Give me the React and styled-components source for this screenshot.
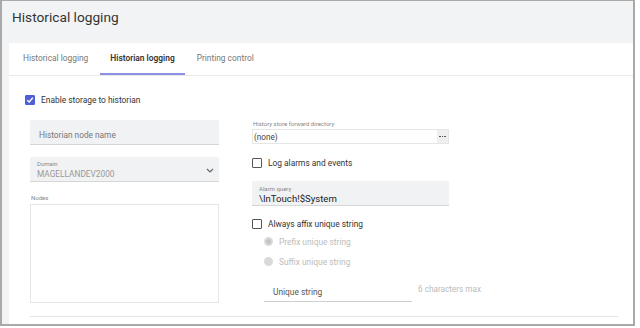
import React from "react";
import styled, { createGlobalStyle } from "styled-components";

const Global = createGlobalStyle`
	html, body {
		margin: 0;
		padding: 0;
		background: #ffffff;
		font-family: Roboto, "Liberation Sans", sans-serif;
	}
`;

export default function App() {
	return (
		<>
			<Global />
			<Frame>
				<Header>Historical logging</Header>
				<Panel>
					<Tabs>
						<Tab>Historical logging</Tab>
						<Tab active>Historian logging</Tab>
						<Tab>Printing control</Tab>
					</Tabs>
					<Content>
						<CheckRow>
							<Check checked>
								<svg width="8" height="8" viewBox="0 0 8 8">
									<path d="M1.2 4.2 L3.2 6 L6.8 1.8" fill="none" stroke="#fff" strokeWidth="1.4" />
								</svg>
							</Check>
							<CheckLabel>Enable storage to historian</CheckLabel>
						</CheckRow>
						<Columns>
							<Column>
								<FilledField top={15}>
									<Placeholder>Historian node name</Placeholder>
								</FilledField>
								<FilledField top={12} select>
									<SmallLabel>Domain</SmallLabel>
									<Value muted>MAGELLANDEV2000</Value>
									<Chevron viewBox="0 0 8 5" width="8" height="5">
										<path d="M1 1 L4 4 L7 1" fill="none" stroke="#666" strokeWidth="1.2" />
									</Chevron>
								</FilledField>
								<OuterLabel>Nodes</OuterLabel>
								<TextBox />
							</Column>
							<Column right>
								<OuterLabel top={15}>History store forward directory</OuterLabel>
								<PathInput>
									<span>(none)</span>
									<DotsButton>
										<Dot />
										<Dot />
										<Dot />
									</DotsButton>
								</PathInput>
								<CheckRow top={13}>
									<Check />
									<CheckLabel>Log alarms and events</CheckLabel>
								</CheckRow>
								<FilledField top={13}>
									<SmallLabel>Alarm query</SmallLabel>
									<Value>\InTouch!$System</Value>
								</FilledField>
								<CheckRow top={12}>
									<Check />
									<CheckLabel>Always affix unique string</CheckLabel>
								</CheckRow>
								<RadioRow top={7}>
									<Radio selected />
									<RadioLabel>Prefix unique string</RadioLabel>
								</RadioRow>
								<RadioRow top={9}>
									<Radio />
									<RadioLabel>Suffix unique string</RadioLabel>
								</RadioRow>
								<UniqueRow>
									<UnderInput>Unique string</UnderInput>
									<Hint>6 characters max</Hint>
								</UniqueRow>
							</Column>
						</Columns>
						<Divider />
					</Content>
				</Panel>
			</Frame>
		</>
	);
}

const Frame = styled.div`
	width: 635px;
	height: 326px;
	box-sizing: border-box;
	border: 2px solid #a9a9a9;
	border-top-width: 1px;
	background: #f2f3f5;
	display: flex;
	flex-direction: column;
	overflow: hidden;
`;

const Header = styled.div`
	height: 42px;
	padding-left: 10px;
	padding-top: 8px;
	box-sizing: border-box;
	font-size: 13.7px;
	color: #333;
`;

const Panel = styled.div`
	flex: 1;
	margin-left: 7px;
	background: #fff;
	display: flex;
	flex-direction: column;
`;

const Tabs = styled.div`
	height: 33px;
	display: flex;
	padding-left: 4px;
	border-bottom: 1px solid #e9e9e9;
	box-sizing: border-box;
`;

const Tab = styled.div`
	padding: 0 10px;
	margin-right: 2px;
	display: flex;
	align-items: center;
	font-size: 8.4px;
	font-weight: ${(p) => (p.active ? 600 : 400)};
	color: ${(p) => (p.active ? "#333" : "#777")};
	border-bottom: 2px solid ${(p) => (p.active ? "#8b90e2" : "transparent")};
	box-sizing: border-box;
`;

const Content = styled.div`
	padding: 18px 0 0 16px;
	display: flex;
	flex-direction: column;
`;

const CheckRow = styled.div`
	display: flex;
	align-items: center;
	height: 11px;
	margin-top: ${(p) => p.top || 0}px;
`;

const Check = styled.div`
	width: 10px;
	height: 10px;
	box-sizing: border-box;
	border-radius: 1px;
	border: 1.5px solid ${(p) => (p.checked ? "#4f5fd6" : "#555")};
	background: ${(p) => (p.checked ? "#4f5fd6" : "#fff")};
	display: flex;
	align-items: center;
	justify-content: center;
`;

const CheckLabel = styled.span`
	margin-left: 6px;
	font-size: 8.4px;
	color: #333;
`;

const Columns = styled.div`
	display: flex;
	padding-left: 5px;
	gap: 33px;
`;

const Column = styled.div`
	width: ${(p) => (p.right ? 197 : 189)}px;
	display: flex;
	flex-direction: column;
`;

const FilledField = styled.div`
	position: relative;
	height: 25px;
	margin-top: ${(p) => p.top}px;
	background: #f1f2f4;
	border-bottom: 1px solid #d6d6d6;
	box-sizing: border-box;
	border-radius: 2px 2px 0 0;
	padding: 3px 7px 0 7px;
	display: flex;
	flex-direction: column;
	justify-content: ${(p) => (p.select ? "flex-start" : "center")};
`;

const Placeholder = styled.span`
	font-size: 8.3px;
	color: #777;
	padding-left: 2px;
	padding-top: 3px;
`;

const SmallLabel = styled.span`
	font-size: 6px;
	color: #888;
	line-height: 8px;
`;

const Value = styled.span`
	font-size: ${(p) => (p.muted ? 8.3 : 9.6)}px;
	color: ${(p) => (p.muted ? "#999" : "#222")};
	line-height: 12px;
`;

const Chevron = styled.svg`
	position: absolute;
	right: 5px;
	top: 11px;
`;

const OuterLabel = styled.span`
	font-size: 6px;
	color: #888;
	margin-top: ${(p) => (p.top !== undefined ? p.top : 12)}px;
	margin-left: 1px;
	line-height: 8px;
`;

const TextBox = styled.div`
	margin-top: 2px;
	height: 99px;
	border: 1px solid #e6e6e6;
	box-sizing: border-box;
`;

const PathInput = styled.div`
	margin-top: 1px;
	height: 15px;
	border: 1px solid #e6e6e6;
	box-sizing: border-box;
	display: flex;
	align-items: center;
	justify-content: space-between;
	font-size: 8.2px;
	color: #444;
	padding-left: 1px;
`;

const DotsButton = styled.span`
	height: 13px;
	width: 11px;
	background: #eeeff1;
	display: flex;
	align-items: center;
	justify-content: center;
	gap: 1px;
`;

const Dot = styled.span`
	width: 1.6px;
	height: 1.6px;
	background: #555;
`;

const RadioRow = styled.div`
	display: flex;
	align-items: center;
	height: 11px;
	padding-left: 12px;
	margin-top: ${(p) => p.top}px;
`;

const Radio = styled.div`
	width: 9px;
	height: 9px;
	border-radius: 50%;
	box-sizing: border-box;
	background: ${(p) => (p.selected ? "#c4c4c4" : "#d9d9d9")};
	border: ${(p) => (p.selected ? "2px solid #dadada" : "none")};
`;

const RadioLabel = styled.span`
	margin-left: 6px;
	font-size: 8.4px;
	color: #bdbdbd;
`;

const UniqueRow = styled.div`
	display: flex;
	align-items: flex-start;
	margin-top: 14px;
	padding-left: 12px;
`;

const UnderInput = styled.div`
	flex: none;
	width: 148px;
	height: 21px;
	border-bottom: 1px solid #cfcfcf;
	box-sizing: border-box;
	font-size: 8.4px;
	color: #555;
	padding: 6px 0 0 9px;
`;

const Hint = styled.span`
	flex: none;
	margin-left: 6px;
	margin-top: 3px;
	font-size: 8.2px;
	color: #bbb;
	white-space: nowrap;
`;

const Divider = styled.div`
	margin: 13px 15px 0 5px;
	height: 1px;
	background: #e6e6e6;
`;
